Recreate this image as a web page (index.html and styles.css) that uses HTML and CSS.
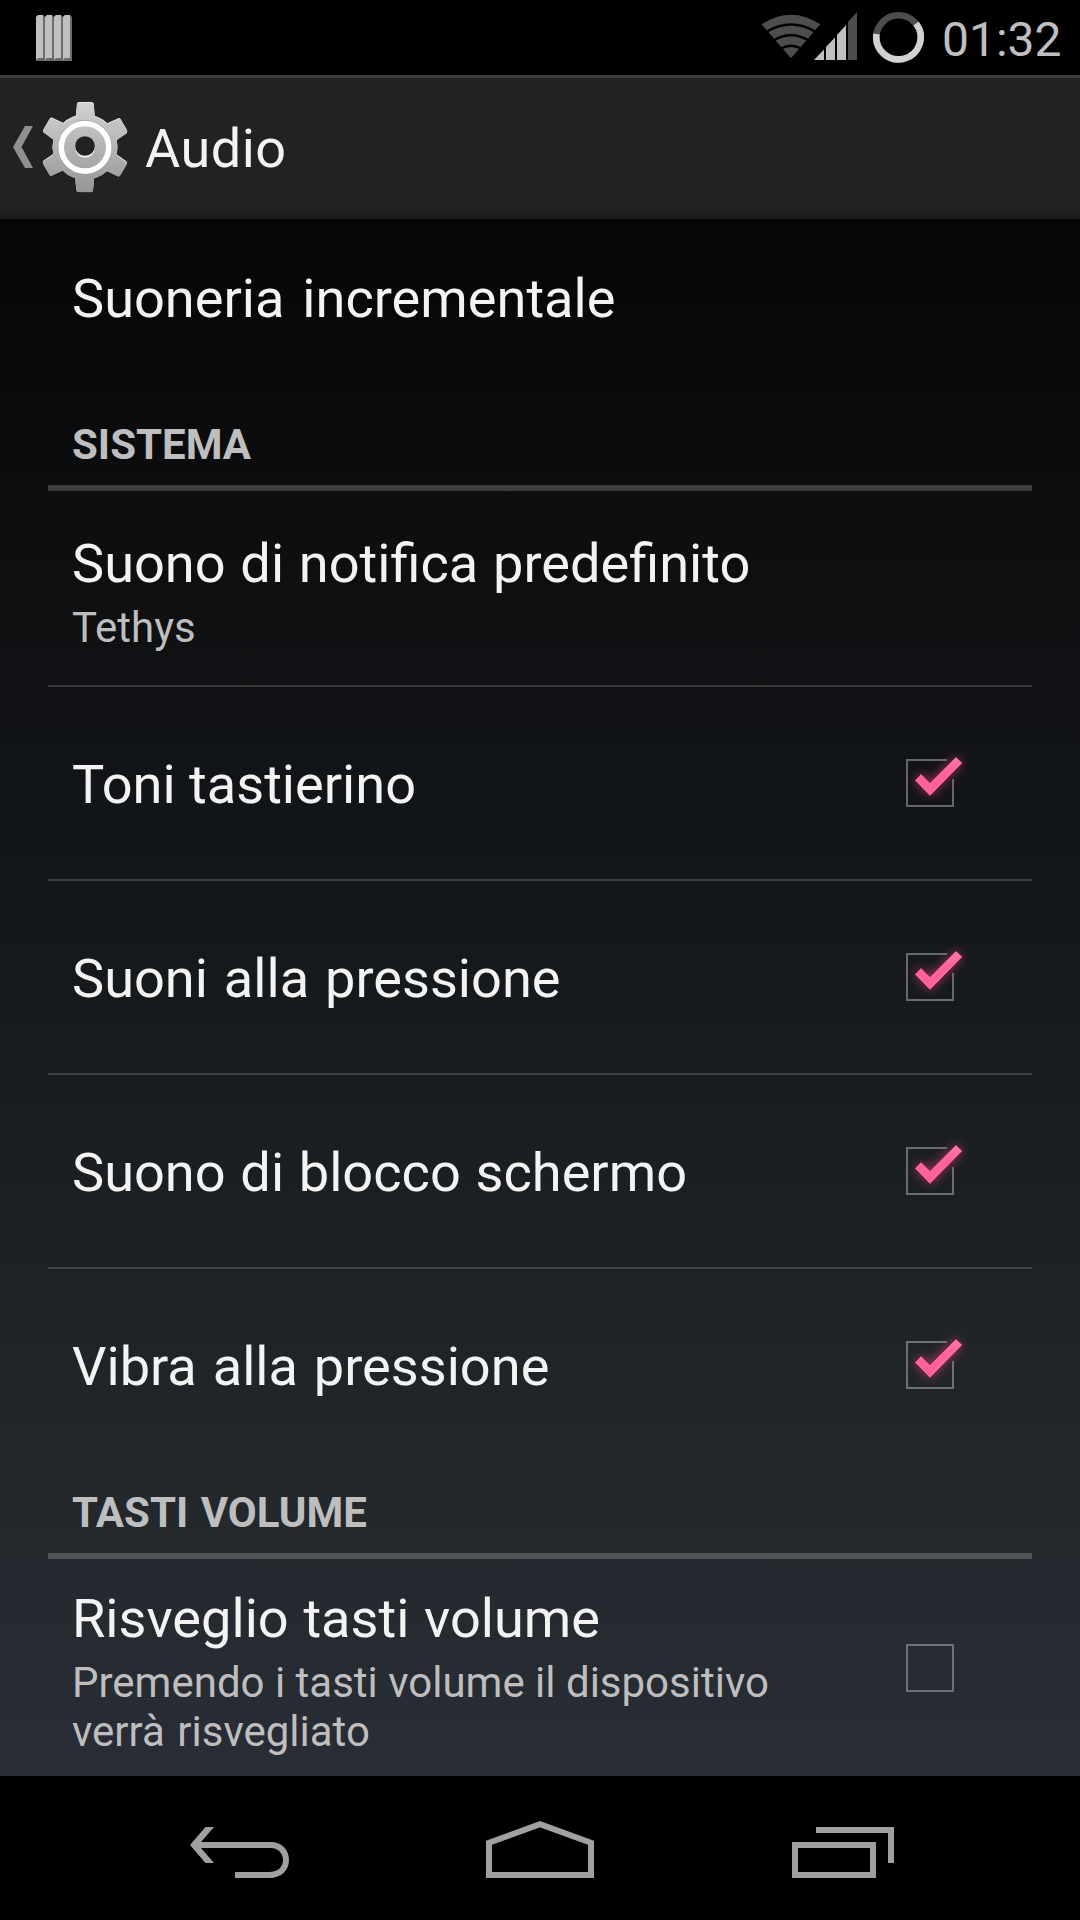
FILE: index.html
```html
<!DOCTYPE html>
<html lang="it">
<head>
<meta charset="utf-8">
<title>Audio</title>
<link rel="stylesheet" href="styles.css">
</head>
<body>
<svg width="0" height="0" class="defs" aria-hidden="true">
  <defs>
    <linearGradient id="pink" x1="0" y1="0" x2="0" y2="1"><stop offset="0" stop-color="#ff78a8"/><stop offset=".4" stop-color="#ff639b"/><stop offset="1" stop-color="#ff6199"/></linearGradient>
    <filter id="glow" x="-60%" y="-60%" width="220%" height="220%"><feGaussianBlur stdDeviation="5.500"/></filter>
    <symbol id="box-on" viewBox="0 0 48 48" overflow="visible">
      <path d="M41 1H1V47H47V20" fill="none" stroke="#fff" stroke-opacity=".35" stroke-width="2"/>
      <path d="M8.7 21.7L14.7 14.7L24 23.3L50-2L56.3 4L24 37Z" fill="#ff4488" opacity=".6" filter="url(#glow)"/>
      <path d="M8.700 21.500L15 14.700L24 23.600L50-2.300L56.600 4L24 37.300Z" fill="url(#pink)" stroke="#1a0a12" stroke-opacity=".8" stroke-width=".7"/>
    </symbol>
    <symbol id="box-off" viewBox="0 0 48 48">
      <rect x="1" y="1" width="46" height="46" fill="none" stroke="#fff" stroke-opacity=".33" stroke-width="2"/>
    </symbol>
  </defs>
</svg>
<div class="screen">
  <header class="status">
    <svg class="bars" width="36" height="46" viewBox="0 0 36 46">
      <defs><g id="bar"><path d="M0 2L2 0H7L9 2V46H0Z" fill="#6b6b6b"/><path d="M0 2L2 0H7V43H2L0 45Z" fill="#bfbfbf"/></g></defs>
      <use href="#bar"/><use href="#bar" x="9"/><use href="#bar" x="18"/><use href="#bar" x="27"/>
    </svg>
    <svg class="signals" width="166" height="54" viewBox="0 0 166 54">
      <path d="M30 49.300L.7 15.300Q30-4 59.300 15.300Z" fill="#4d4d4d"/>
      <g fill="none" stroke="#000" stroke-width="2.400"><path d="M5.700 22.600Q30 8.400 54.300 22.600"/><path d="M12.500 31.200Q30 21.200 47.500 31.200"/><path d="M20 39.500Q30 34.100 40 39.500"/></g>
      <g fill="#bfbfbf"><path d="M53 51L63 40.500V51Z"/><path d="M65 51V38L74 28.500V51Z"/><path d="M76 51V26L85 16V51Z"/></g>
      <path d="M87 51V13L96 3V51Z" fill="#4d4d4d"/>
      <circle cx="137.500" cy="28.500" r="22.200" fill="none" stroke="#4d4d4d" stroke-width="6.600"/>
      <path d="M115.500 25A22.200 22.200 0 1 0 155 14.500" fill="none" stroke="#d2d2d2" stroke-width="6.600"/>
    </svg>
    <span class="clock">01:32</span>
  </header>
  <div class="actionbar">
    <svg width="130" height="110" viewBox="0 0 130 110">
      <defs>
        <linearGradient id="metal" gradientUnits="userSpaceOnUse" x1="0" y1="10" x2="0" y2="100"><stop offset="0" stop-color="#d2d2d2"/><stop offset="1" stop-color="#969696"/></linearGradient>
        <path id="tooth" d="M75.500 27L77 11.500Q77.200 10 79 10H91Q93.500 10 93.700 11.500L95 27Z"/>
        <g id="gear"><circle cx="85" cy="54.700" r="32.500"/><use href="#tooth"/><use href="#tooth" transform="rotate(60 85 54.700)"/><use href="#tooth" transform="rotate(120 85 54.700)"/><use href="#tooth" transform="rotate(180 85 54.700)"/><use href="#tooth" transform="rotate(240 85 54.700)"/><use href="#tooth" transform="rotate(300 85 54.700)"/></g>
        <mask id="gearmask"><use href="#gear" y=".8" fill="#fff"/></mask>
      </defs>
      <path d="M25 34H33L21.500 55L33 76H25L13 55Z" fill="#909090"/>
      <use href="#gear" y="1.200" fill="#0c0c0c" stroke="#111" stroke-opacity=".5"/>
      <use href="#gear" fill="#f4f4f4"/>
      <rect x="35" y="5" width="100" height="99" fill="url(#metal)" mask="url(#gearmask)"/>
      <circle cx="85" cy="55.300" r="27.200" fill="#a0a0a0"/>
      <circle cx="85" cy="55.300" r="23.800" fill="url(#metal)" stroke="#fff" stroke-width="5.600"/>
      <circle cx="85" cy="56" r="9.800" fill="#eee"/>
      <circle cx="85" cy="54" r="9.800" fill="#222"/>
    </svg>
    <h1>Audio</h1>
  </div>
  <main class="list">
    <div class="row single first"><div class="title wide">Suoneria incrementale</div></div>
    <h2>SISTEMA</h2>
    <div class="row detail"><div class="text"><div class="title medium">Suono di notifica predefinito</div><div class="summary">Tethys</div></div></div>
    <div class="row single divided"><div class="title snug">Toni tastierino</div><svg class="check"><use href="#box-on"/></svg></div>
    <div class="row single divided"><div class="title">Suoni alla pressione</div><svg class="check"><use href="#box-on"/></svg></div>
    <div class="row single divided"><div class="title medium">Suono di blocco schermo</div><svg class="check"><use href="#box-on"/></svg></div>
    <div class="row single divided"><div class="title">Vibra alla pressione</div><svg class="check"><use href="#box-on"/></svg></div>
    <h2>TASTI VOLUME</h2>
    <div class="row last"><div class="text"><div class="title medium">Risveglio tasti volume</div><div class="summary">Premendo i tasti volume il dispositivo<br><span class="loose">verrà risvegliato</span></div></div><svg class="check"><use href="#box-off"/></svg></div>
  </main>
  <nav class="nav">
    <svg width="100" height="60" viewBox="0 0 100 60"><path d="M0 24L15.500 6H24L11 21H81C92 21 99 29 99 39S92 57 79 57H45V51H79C88 51 93 46 93 39S88 27 81 27H11L24 42H15.500Z" fill="#a0a0a0"/></svg>
    <svg width="108" height="60" viewBox="0 0 108 60"><path d="M3 21.800L54 3.300L105 21.800V54H3Z" fill="none" stroke="#a0a0a0" stroke-width="6"/></svg>
    <svg width="102" height="60" viewBox="0 0 102 60"><path d="M24 9H99V42M3 24H81V54H3Z" fill="none" stroke="#a0a0a0" stroke-width="6"/></svg>
  </nav>
</div>
</body>
</html>
```
FILE: styles.css
```css
* { box-sizing: border-box; }
body { margin: 0; background: #000; }
.defs { display: block; height: 0; }
svg { display: block; flex: none; }
.screen {
  width: 1080px;
  height: 1920px;
  display: flex;
  flex-direction: column;
  overflow: hidden;
  color: #f3f3f3;
  font-family: Roboto, sans-serif;
  background: linear-gradient(#000, #0e0f11 30%, #15191c 50%, #22272b 76%, #282c34 90%, #282d35);
}
.status {
  height: 75px;
  flex: none;
  display: flex;
  align-items: flex-start;
  background: #000;
  padding-left: 36px;
}
.bars { margin-top: 15px; }
.signals { margin: 9px 0 0 689px; }
.clock {
  margin: 12px 0 0 15px;
  font-size: 48px;
  line-height: 56px;
  color: #bfbfbf;
}
.actionbar {
  height: 144px;
  flex: none;
  display: flex;
  align-items: flex-start;
  padding-top: 14px;
  gap: 15px;
  background: #222;
  border-top: 3px solid #3b3b3b;
  border-bottom: 6px solid #1c1c1c;
}
h1 {
  margin: 25px 0 0;
  font-size: 54px;
  line-height: 64px;
  font-weight: 400;
  letter-spacing: .5px;
}
.list {
  height: 1557px;
  flex: none;
  overflow: hidden;
  padding: 0 48px;
}
.row {
  height: 192px;
  display: flex;
  align-items: center;
  justify-content: space-between;
  padding: 0 78px 0 24px;
}
.first { margin-top: -18px; }
.detail { height: 194px; }
.divided { height: 194px; border-top: 2px solid rgba(255, 255, 255, .16); }
.last { height: 218px; }
.title {
  font-size: 54.15px;
  line-height: 64px;
  word-spacing: 2.5px;
  white-space: nowrap;
}
.single .title { margin-top: 4px; }
.title.wide { word-spacing: 4.5px; }
.title.snug { word-spacing: 0; }
.title.medium { word-spacing: 1.3px; }
.summary {
  margin: 7px 0 -7px;
  font-size: 42px;
  line-height: 49px;
  color: #bebebe;
  white-space: nowrap;
}
.loose { word-spacing: 2px; }
.check { width: 48px; height: 48px; overflow: visible; }
h2 {
  margin: 0;
  height: 98px;
  padding: 27px 24px 0;
  border-bottom: 6px solid rgba(255, 255, 255, .2);
  font-size: 42px;
  line-height: 50px;
  font-weight: 700;
  word-spacing: 2px;
  color: #bebebe;
}
.nav {
  height: 144px;
  flex: none;
  display: flex;
  padding: 45px 0 0 190px;
  background: #000;
}
.nav svg + svg { margin-left: 196px; }
.nav svg + svg + svg { margin-left: 198px; }
```
